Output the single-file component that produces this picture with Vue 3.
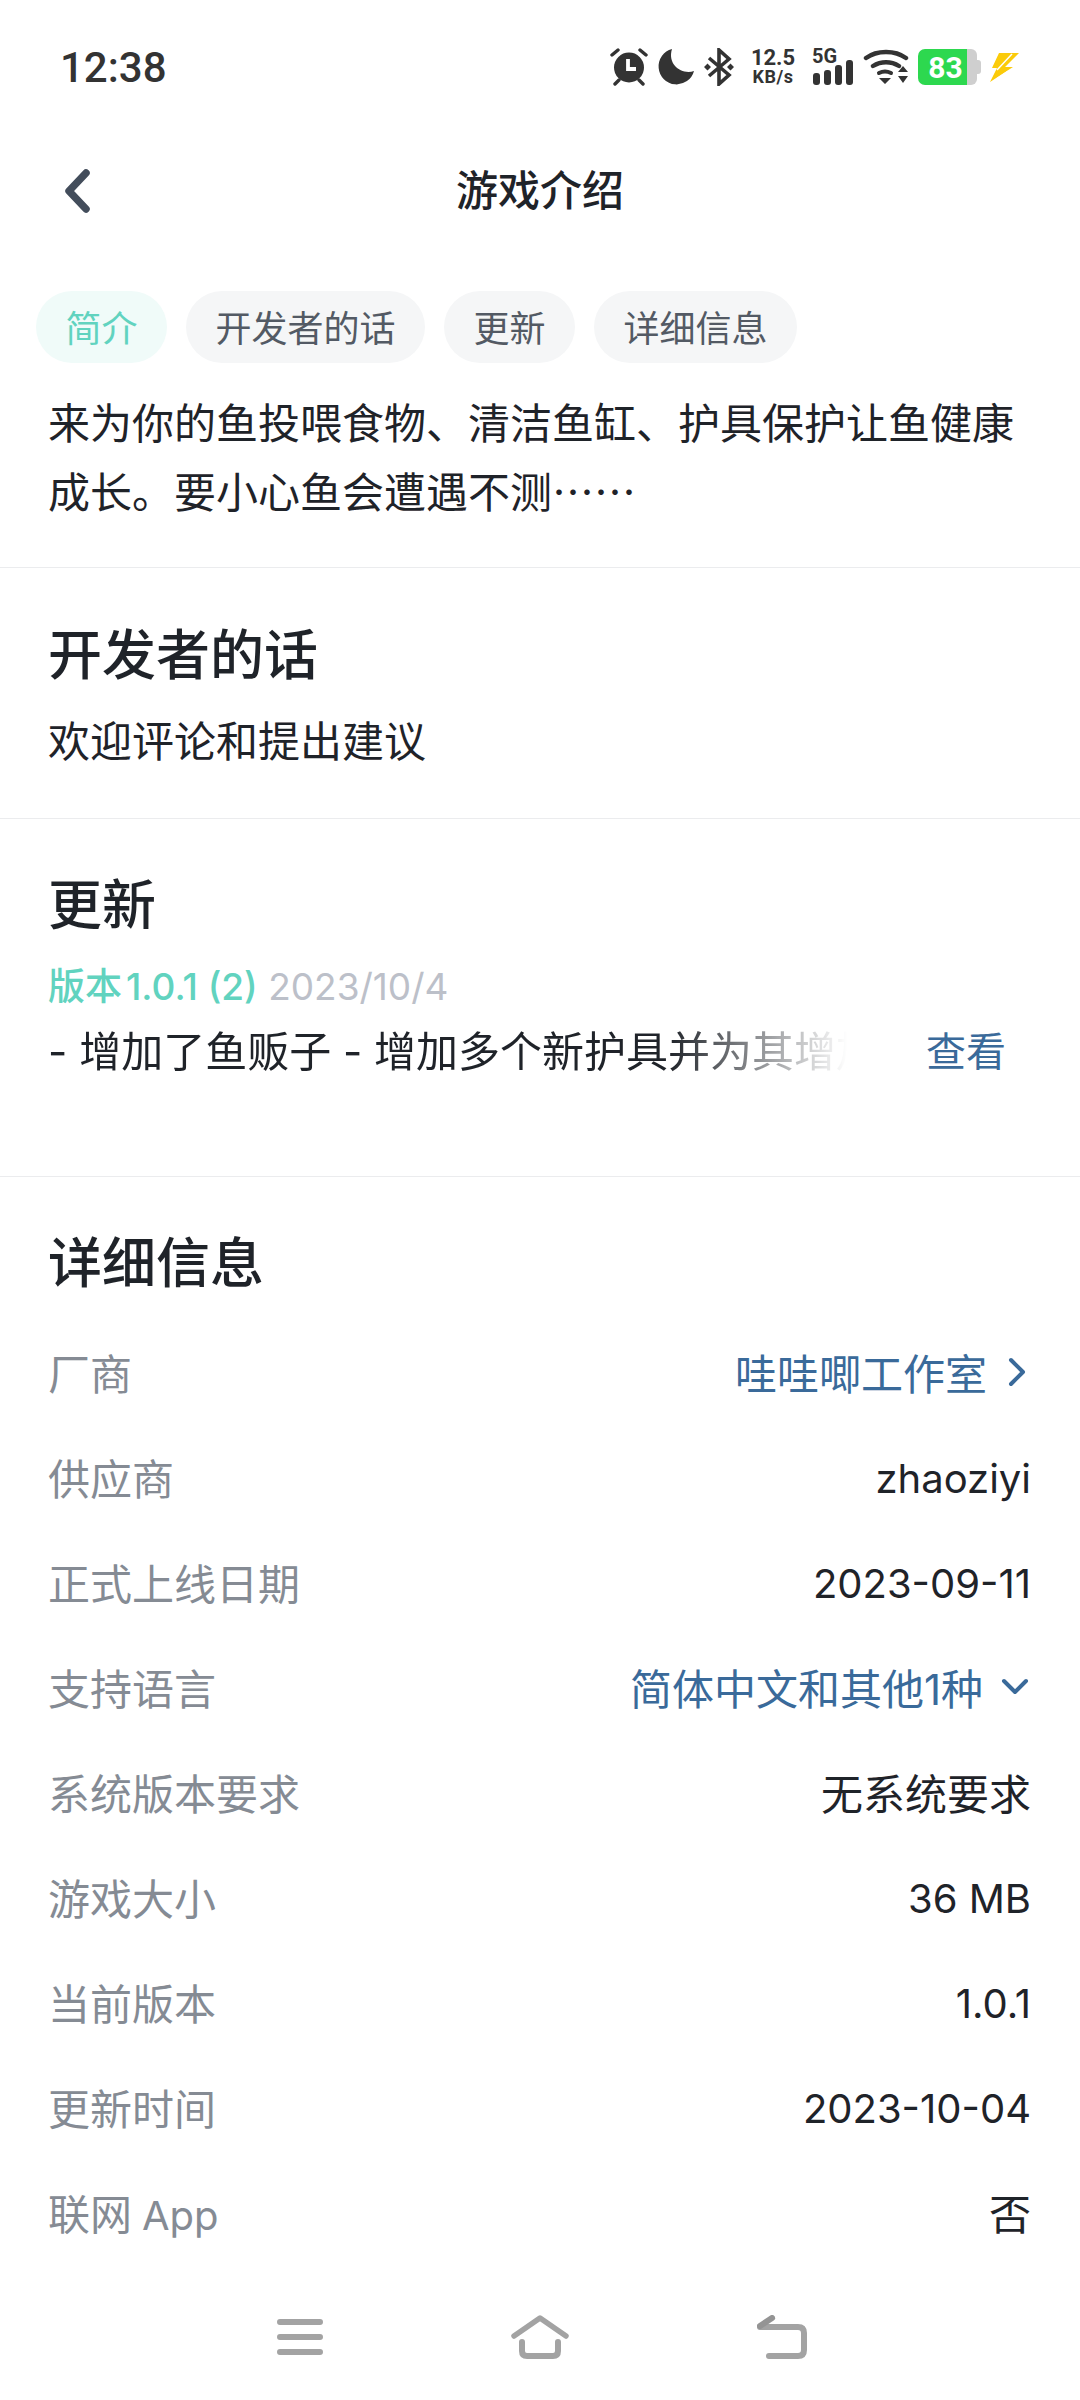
<script setup>
const tabs = ['简介', '开发者的话', '更新', '详细信息']
const rows = [
  { label: '厂商', value: '哇哇唧工作室', link: true, icon: 'right' },
  { label: '供应商', value: 'zhaoziyi', latin: true },
  { label: '正式上线日期', value: '2023-09-11', latin: true },
  { label: '支持语言', value: '简体中文和其他1种', link: true, icon: 'down' },
  { label: '系统版本要求', value: '无系统要求' },
  { label: '游戏大小', value: '36 MB', latin: true },
  { label: '当前版本', value: '1.0.1', latin: true },
  { label: '更新时间', value: '2023-10-04', latin: true },
  { label: '联网', suffix: 'App', value: '否' }
]
</script>

<template>
  <div class="page">
    <div class="status">
      <span class="time">12:38</span>
      <div class="status-icons">
        <!-- alarm clock -->
        <svg class="ic" width="38" height="38" viewBox="0 0 38 38">
          <circle cx="19" cy="19.5" r="15" fill="#333" />
          <path d="M18 11v10h8" fill="none" stroke="#fff" stroke-width="3.8" />
          <path d="M2 7l6-5M36 7l-6-5M5 36l4-4M33 36l-4-4" stroke="#333" stroke-width="3.4" stroke-linecap="round" />
        </svg>
        <!-- moon -->
        <svg class="ic moon" width="38" height="38" viewBox="0 0 38 38">
          <path d="M15 1A18 18 0 1 0 37 23C25 27 10 17 15 1Z" fill="#333" />
        </svg>
        <!-- bluetooth -->
        <svg class="ic bt" width="30" height="38" viewBox="0 0 30 38">
          <path d="M5 10l20 17-10 9V2l10 9L5 28" fill="none" stroke="#333" stroke-width="3.6" />
          <path d="M0 19l3.500-3.500 3.500 3.500-3.500 3.500zM23 19l3.500-3.500 3.500 3.500-3.500 3.500z" fill="#333" />
        </svg>
        <div class="speed"><span>12.5</span><span>KB/s</span></div>
        <!-- cellular signal -->
        <div class="signal">
          <span class="five">5G</span>
          <svg width="42" height="25" viewBox="0 0 42 25">
            <rect x="1" y="13" width="7" height="12" rx="3" fill="#333" />
            <rect x="12" y="10" width="7" height="15" rx="3" fill="#333" />
            <rect x="23" y="5" width="7" height="20" rx="3" fill="#333" />
            <rect x="34" y="0" width="7" height="25" rx="3" fill="#333" />
          </svg>
        </div>
        <!-- wifi -->
        <svg class="ic wifi" width="46" height="36" viewBox="0 0 46 36">
          <path d="M3 9C14 1 32 1 43 9M10 17c8-5 18-5 26 0" fill="none" stroke="#333" stroke-width="4.4" stroke-linecap="round" />
          <path d="M16 24c4-2 8-2 12 0" fill="none" stroke="#333" stroke-width="4" stroke-linecap="round" />
          <path d="M16 29h12l-6 6zM35 23l5-6 5 6zM35 27h10l-5 7z" fill="#333" />
        </svg>
        <!-- battery -->
        <div class="battery">
          <div class="cell"><span class="level">83</span></div>
          <div class="rest"></div>
          <div class="nub"></div>
        </div>
        <!-- charging bolt -->
        <svg class="ic bolt" width="32" height="32" viewBox="0 0 32 32">
          <path d="M11 2h20L17 16h8L2 31l7-14H4z" fill="#fbcb0a" />
          <path d="M24 3L9 19" stroke="#fff" stroke-width="1.500" />
          <path d="M20 20L8 28" stroke="#fff" stroke-width="1" />
        </svg>
      </div>
    </div>

    <div class="nav">
      <svg class="back" width="26" height="44" viewBox="0 0 26 44">
        <path d="M21 4L4 22l17 18" fill="none" stroke="#434d5b" stroke-width="7.5" stroke-linecap="round" stroke-linejoin="round" />
      </svg>
      <span class="title">游戏介绍</span>
    </div>

    <div class="tabs">
      <span v-for="(t, i) in tabs" :key="t" class="tab" :class="{ on: i === 0 }">{{ t }}</span>
    </div>

    <section class="intro">
      <p class="body">来为你的鱼投喂食物、清洁鱼缸、护具保护让鱼健康成长。要小心鱼会遭遇不测……</p>
    </section>

    <section class="dev">
      <h2>开发者的话</h2>
      <p class="body gap">欢迎评论和提出建议</p>
    </section>

    <section class="update">
      <h2>更新</h2>
      <div class="version"><span class="ver">版本<span class="num">1.0.1 (2)</span></span> <span class="date">2023/10/4</span></div>
      <div class="note">
        <p class="body fade">- 增加了鱼贩子 - 增加多个新护具并为其增加</p>
        <span class="more">查看</span>
      </div>
    </section>

    <section class="details">
      <h2>详细信息</h2>
      <div class="rows">
        <div v-for="r in rows" :key="r.label" class="row">
          <span class="label">{{ r.label }}<span v-if="r.suffix" class="suffix">{{ r.suffix }}</span></span>
          <span class="value" :class="{ link: r.link, latin: r.latin }">
            {{ r.value }}
            <svg v-if="r.icon === 'right'" class="chev" width="24" height="32" viewBox="0 0 24 32">
              <path d="M6 4l12 12L6 28" fill="none" stroke="#3a6a9a" stroke-width="4" stroke-linecap="round" stroke-linejoin="round" />
            </svg>
            <svg v-if="r.icon === 'down'" class="chev" width="28" height="18" viewBox="0 0 28 18">
              <path d="M3 3l11 11L25 3" fill="none" stroke="#3a6a9a" stroke-width="4" stroke-linecap="round" stroke-linejoin="round" />
            </svg>
          </span>
        </div>
      </div>
    </section>

    <div class="softkeys">
      <svg width="46" height="36" viewBox="0 0 46 36">
        <path d="M3 3h40M3 18h40M3 33h40" stroke="#a3a3a3" stroke-width="6" stroke-linecap="round" />
      </svg>
      <svg width="58" height="44" viewBox="0 0 58 44">
        <path d="M3 21L29 3l26 18" fill="none" stroke="#a3a3a3" stroke-width="5.500" stroke-linecap="round" stroke-linejoin="round" />
        <path d="M11 27v9q0 5 5 5h26q5 0 5-5v-9" fill="none" stroke="#a3a3a3" stroke-width="6" stroke-linecap="round" />
      </svg>
      <svg width="52" height="44" viewBox="0 0 52 44">
        <path d="M3 12h38q6 0 6 6v17q0 6-6 6H12" fill="none" stroke="#a3a3a3" stroke-width="6" stroke-linecap="round" />
        <path d="M3 11l12-8" stroke="#949494" stroke-width="6" stroke-linecap="round" />
      </svg>
    </div>
  </div>
</template>

<style scoped>
.page {
  width: 1080px;
  height: 2400px;
  display: flex;
  flex-direction: column;
  overflow: hidden;
  position: relative;
  background: #fff;
  color: #1f2329;
  font-family: Inter, "Noto Sans CJK SC", sans-serif;
}
.status {
  height: 134px;
  flex: none;
  display: flex;
  align-items: center;
  justify-content: space-between;
  padding: 0 60px;
}
.time {
  font-family: Roboto, sans-serif;
  font-size: 42px;
  font-weight: 500;
  color: #333;
}
.status-icons {
  display: flex;
  align-items: center;
  color: #333;
}
.ic { display: block; }
.moon { margin-left: 9px; }
.bt { margin-left: 9px; }
.speed {
  margin-left: 17px;
  width: 44px;
  display: flex;
  flex-direction: column;
  align-items: center;
  font-family: Roboto, sans-serif;
  font-weight: 700;
  line-height: 19px;
}
.speed span:first-child { font-size: 22px; }
.speed span:last-child { font-size: 18px; letter-spacing: 0.5px; }
.signal {
  margin-left: 17px;
  display: flex;
  flex-direction: column;
  position: relative;
  height: 36px;
  justify-content: flex-end;
  width: 44px;
}
.five {
  position: absolute;
  left: 0;
  top: -3px;
  font-family: Roboto, sans-serif;
  font-size: 20px;
  font-weight: 700;
  line-height: 20px;
}
.wifi { margin-left: 7px; }
.battery {
  margin-left: 9px;
  width: 63px;
  height: 36px;
  display: flex;
  align-items: center;
}
.cell {
  width: 49px;
  height: 36px;
  background: #2dd84f;
  border-radius: 7px 0 0 7px;
  display: flex;
  align-items: center;
  justify-content: center;
}
.level {
  color: #fff;
  font-family: Roboto, sans-serif;
  font-size: 30px;
  font-weight: 700;
  padding-left: 6px;
}
.rest {
  width: 10px;
  height: 36px;
  background: #cfcfcf;
  border-radius: 0 6px 6px 0;
}
.nub {
  width: 4px;
  height: 14px;
  background: #cfcfcf;
  border-radius: 0 3px 3px 0;
}
.bolt { margin-left: 7px; }
.nav {
  height: 114px;
  flex: none;
  position: relative;
  display: flex;
  align-items: center;
  justify-content: center;
}
.back {
  position: absolute;
  left: 65px;
  top: 35px;
}
.title {
  font-size: 42px;
  line-height: 110px;
  font-weight: 500;
  color: #1f2329;
}
.tabs {
  margin-top: 43px;
  padding-left: 36px;
  display: flex;
  gap: 19px;
}
.tab {
  height: 72px;
  line-height: 77px;
  padding: 0 29.5px;
  font-size: 36px;
  border-radius: 36px;
  background: #f5f6f7;
  color: #535a64;
}
.tab.on {
  background: #f0fbf9;
  color: #61d3bf;
}
section {
  flex: none;
  padding: 0 48px;
  border-bottom: 1px solid #ebecee;
}
.body {
  margin: 0;
  font-size: 42px;
  line-height: 69px;
}
.intro { padding-top: 23px; padding-bottom: 43px; }
.intro .body { font-family: "Noto Sans CJK SC", sans-serif; }
h2 {
  margin: 0 0 -3px;
  font-size: 54px;
  line-height: 75px;
  font-weight: 500;
}
.dev { padding-top: 50px; padding-bottom: 42px; }
.gap { margin-top: 17px; }
.update { padding-top: 49px; padding-bottom: 90px; }
.version {
  margin-top: 22px;
  font-size: 37px;
  line-height: 50px;
}
.ver { color: #61d3bf; font-weight: 500; }
.num { margin-left: 4px; }
.date { color: #bcc0c9; }
.note {
  margin-top: 5px;
  display: flex;
  align-items: center;
}
/* long note trails off before the "more" link */
.fade {
  width: 850px;
  white-space: nowrap;
  -webkit-mask-image: linear-gradient(to right, #000 73%, transparent 94%);
  mask-image: linear-gradient(to right, #000 73%, transparent 94%);
}
.more {
  margin-left: 28px;
  font-size: 40px;
  line-height: 66px;
  color: #3a6a9a;
}
.details {
  padding: 49px 49px 0 48px;
  border-bottom: 0;
}
.rows { margin-top: 21px; }
.row {
  height: 105px;
  display: flex;
  align-items: center;
  justify-content: space-between;
  font-size: 42px;
}
.label { color: #858b94; }
.suffix {
  margin-left: 10px;
  font-size: 40px;
}
.value {
  display: flex;
  align-items: center;
  color: #1f2329;
}
.latin {
  font-size: 40px;
  padding-top: 4px;
}
.link { color: #3a6a9a; }
.chev { margin-left: 18px; margin-right: 2px; }
.softkeys {
  position: absolute;
  left: 277px;
  top: 2315px;
  display: flex;
  align-items: center;
  gap: 188px;
}
</style>
